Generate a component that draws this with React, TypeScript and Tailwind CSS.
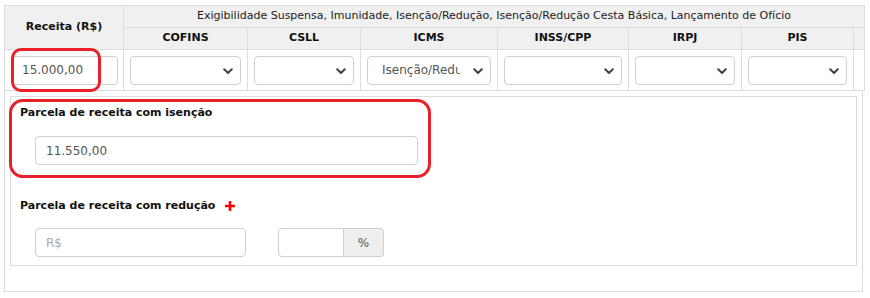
import React from 'react';

const columns = [
  { name: 'COFINS', width: 'w-[124px]', value: '' },
  { name: 'CSLL', width: 'w-[113px]', value: '' },
  { name: 'ICMS', width: 'w-[137px]', value: 'Isenção/Redução' },
  { name: 'INSS/CPP', width: 'w-[131px]', value: '' },
  { name: 'IRPJ', width: 'w-[113px]', value: '' },
  { name: 'PIS', width: 'w-[112px]', value: '' },
];

const Chevron = () => (
  <svg width="10" height="7" viewBox="0 0 10 7" className="pointer-events-none absolute right-[7px] top-[11px]">
    <path d="M1.2 1.2 L5 5 L8.8 1.2" fill="none" stroke="#444" strokeWidth="2" strokeLinecap="round" strokeLinejoin="round" />
  </svg>
);

const SelectBox = ({ value }: { value: string }) => (
  <div className="relative h-[29px] w-full rounded-[4px] border border-[#cfcfcf] bg-white">
    <select
      defaultValue={value}
      className="h-full w-full appearance-none overflow-hidden bg-transparent pl-[14px] pr-[30px] text-[12px] text-[#555] outline-none"
    >
      <option value=""></option>
      <option value="Isenção/Redução">Isenção/Redução</option>
    </select>
    <Chevron />
  </div>
);

const App = () => {
  return (
    <div className="relative h-[298px] w-[870px] bg-white pl-[4px] pt-[5px] font-['DejaVu_Sans',sans-serif] text-[11px] text-[#222]">
      <table className="w-[860px] table-fixed border-collapse">
        <colgroup>
          <col className="w-[119px]" />
          {columns.map((c) => (
            <col key={c.name} className={c.width} />
          ))}
          <col className="w-[11px]" />
        </colgroup>
        <thead>
          <tr className="h-[22px] bg-[#f0f0f0]">
            <th rowSpan={2} className="border border-[#dddddd] text-[11px] font-bold text-[#111]">
              Receita (R$)
            </th>
            <th colSpan={7} className="border border-[#dddddd] whitespace-nowrap text-[11px] font-normal text-[#222]">
              Exigibilidade Suspensa, Imunidade, Isenção/Redução, Isenção/Redução Cesta Básica, Lançamento de Ofício
            </th>
          </tr>
          <tr className="h-[22px] bg-[#f0f0f0]">
            {columns.map((c) => (
              <th key={c.name} className="border border-[#dddddd] text-[11px] font-bold text-[#111]">
                {c.name}
              </th>
            ))}
            <th className="border border-[#dddddd]"></th>
          </tr>
        </thead>
        <tbody>
          <tr className="h-[41px]">
            <td className="border border-[#dddddd] pl-[6px] pr-[5px]">
              <input
                defaultValue="15.000,00"
                className="h-[29px] w-full rounded-[4px] border border-[#cfcfcf] px-[10px] text-[12px] text-[#555] outline-none"
              />
            </td>
            {columns.map((c) => (
              <td key={c.name} className="border border-[#dddddd] px-[6px]">
                <SelectBox value={c.value} />
              </td>
            ))}
            <td className="border border-[#dddddd]"></td>
          </tr>
        </tbody>
      </table>

      <div className="w-[859px] border-x border-b border-[#dddddd] px-[5px] pb-[25px] pt-[5px]">
        <div className="border border-[#dddddd] px-[9px] pb-[8px] pt-[7px]">
          <div className="h-[17px] text-[11px] font-bold leading-[17px] text-[#111]">Parcela de receita com isenção</div>
          <div className="mt-[15px] pl-[15px]">
            <input
              defaultValue="11.550,00"
              className="h-[29px] w-[383px] rounded-[4px] border border-[#cfcfcf] px-[10px] text-[12px] text-[#555] outline-none"
            />
          </div>

          <div className="mt-[32px] flex h-[17px] items-center gap-[10px] text-[11px] font-bold leading-[17px] text-[#111]">
            <span>Parcela de receita com redução</span>
            <svg width="10" height="10" viewBox="0 0 10 10">
              <path d="M5 0 V10 M0 5 H10" stroke="#ff0000" strokeWidth="2.6" />
            </svg>
          </div>
          <div className="mt-[14px] flex items-center gap-[32px] pl-[15px]">
            <input
              placeholder="R$"
              className="h-[29px] w-[211px] rounded-[4px] border border-[#cfcfcf] px-[10px] text-[12px] text-[#555] placeholder:text-[#aaa] outline-none"
            />
            <div className="flex h-[29px]">
              <input className="h-full w-[66px] rounded-l-[4px] border border-[#cfcfcf] px-[8px] text-[12px] outline-none" />
              <span className="flex h-full w-[40px] items-center justify-center rounded-r-[4px] border border-l-0 border-[#cfcfcf] bg-[#eeeeee] text-[12px] text-[#555]">
                %
              </span>
            </div>
          </div>
        </div>
      </div>

      {/* red annotation marks */}
      <div className="pointer-events-none absolute left-[11px] top-[48px] h-[44px] w-[90px] rounded-[10px] border-[3px] border-[#e8202a]"></div>
      <div className="pointer-events-none absolute left-[9px] top-[99px] h-[79px] w-[422px] rounded-[14px] border-[3px] border-[#e8202a]"></div>
    </div>
  );
};

export default App;
